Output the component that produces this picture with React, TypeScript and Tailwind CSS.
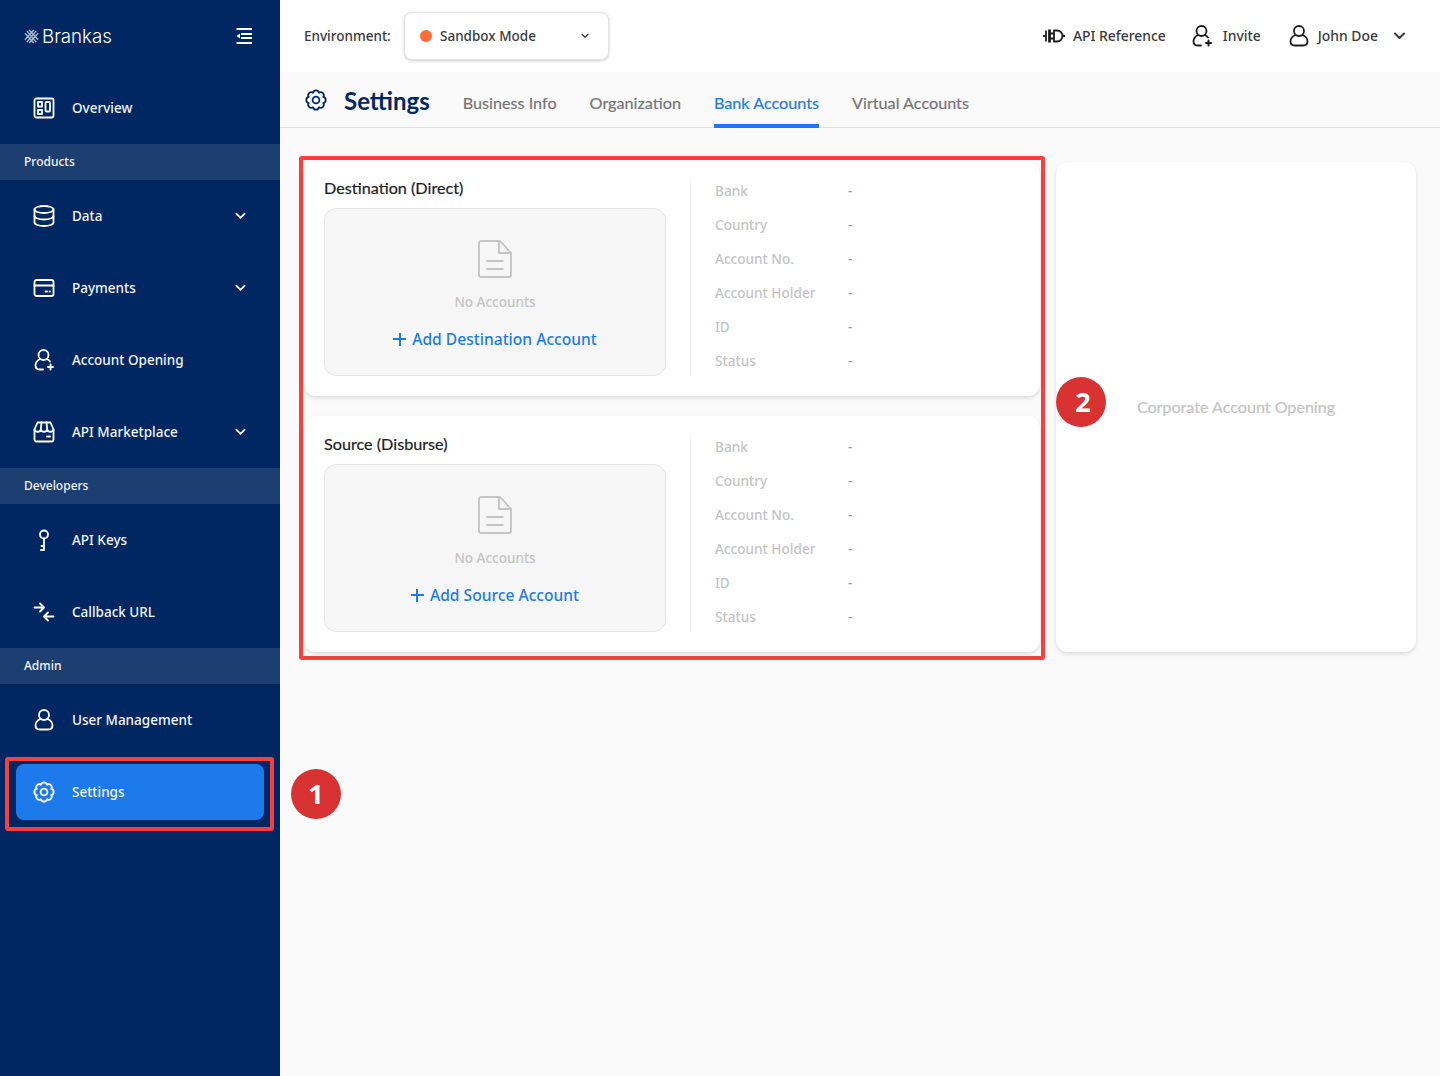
import React from 'react';

const ubuntuish = { fontFamily: '"Noto Sans", sans-serif' };
const lato = { fontFamily: 'Lato, sans-serif' };

type IconProps = { className?: string };

const Svg: React.FC<IconProps & { children: React.ReactNode }> = ({ className, children }) => (
  <svg viewBox="0 0 24 24" fill="none" stroke="currentColor" strokeWidth={1.8} strokeLinecap="round" strokeLinejoin="round" className={className}>
    {children}
  </svg>
);

const OverviewIcon = ({ className }: IconProps) => (
  <Svg className={className}>
    <rect x="2.5" y="2.5" width="19" height="19" rx="2" />
    <rect x="6" y="6" width="4" height="4.5" />
    <rect x="6" y="14" width="4" height="4" />
    <rect x="13.5" y="6" width="4.5" height="9.5" rx="1" />
  </Svg>
);
const DataIcon = ({ className }: IconProps) => (
  <Svg className={className}>
    <ellipse cx="12" cy="5.5" rx="9.5" ry="3.5" />
    <path d="M2.5 5.5v13c0 2 4.3 3.5 9.5 3.5s9.5-1.5 9.5-3.5v-13" />
    <path d="M2.5 12c0 2 4.3 3.5 9.5 3.5s9.5-1.5 9.5-3.5" />
  </Svg>
);
const CardIcon = ({ className }: IconProps) => (
  <Svg className={className}>
    <rect x="2.5" y="4" width="19" height="16" rx="2" />
    <path d="M2.5 9.5h19" />
    <path d="M13.5 15.5h1.5M17.5 15.5h.5" />
  </Svg>
);
const UserPlusIcon = ({ className }: IconProps) => (
  <Svg className={className}>
    <circle cx="11.5" cy="7" r="5" />
    <path d="M8 11c-3 1.5-4.5 4-4.5 6.5 0 2.5 2 4 4.5 4h3" />
    <path d="M15 11c1.2.6 2.2 1.4 3 2.5" />
    <path d="M18.5 16.5v5M16 19h5" strokeWidth={2} />
  </Svg>
);
const StoreIcon = ({ className }: IconProps) => (
  <Svg className={className}>
    <path d="M5.5 2.5h13l3 7v10a2 2 0 0 1-2 2h-15a2 2 0 0 1-2-2v-10z" />
    <path d="M2.5 9.5c1 3 5.5 3 6.3 0 .8 3 5.6 3 6.4 0 .8 3 5.3 3 6.3 0" />
    <path d="M8.8 9.5l.7-7M15.2 9.5l-.7-7" />
    <path d="M15 16.5h3" />
  </Svg>
);
const KeyIcon = ({ className }: IconProps) => (
  <Svg className={className}>
    <circle cx="12" cy="6.5" r="4" />
    <path d="M12 10.5V22h-3M12 18H9.5" />
  </Svg>
);
const ArrowsIcon = ({ className }: IconProps) => (
  <Svg className={className}>
    <path d="M2.5 7.5h9M8 3.5l4 4-4 4" />
    <path d="M21.5 16.5h-9M16 12.5l-4 4 4 4" />
  </Svg>
);
const UserIcon = ({ className }: IconProps) => (
  <Svg className={className}>
    <circle cx="12" cy="7" r="5" />
    <path d="M8.5 11c-3 1.2-5 3.5-5 6.5 0 2.5 2 4 4.5 4h8c2.5 0 4.5-1.5 4.5-4 0-3-2-5.3-5-6.5" />
  </Svg>
);

// eight rounded lobes around the centre
const gearPath = (() => {
  const pt = (k: number) => {
    const a = ((22.5 + 45 * k) * Math.PI) / 180;
    return `${(12 + 7.9 * Math.cos(a)).toFixed(2)} ${(12 + 7.9 * Math.sin(a)).toFixed(2)}`;
  };
  let d = `M${pt(0)}`;
  for (let k = 1; k <= 8; k++) d += `A3.1 3.1 0 0 1 ${pt(k)}`;
  return d + 'Z';
})();

const GearIcon = ({ className }: IconProps) => (
  <Svg className={className}>
    <circle cx="12" cy="12" r="3.4" />
    <path d={gearPath} />
  </Svg>
);
const ChevronIcon = ({ className }: IconProps) => (
  <svg viewBox="0 0 12 8" fill="none" stroke="currentColor" strokeWidth={2} strokeLinecap="round" strokeLinejoin="round" className={className}>
    <path d="M1.5 1.5 6 6l4.5-4.5" />
  </svg>
);
const PlugIcon = ({ className }: IconProps) => (
  <svg viewBox="0 0 22 14" fill="none" stroke="currentColor" strokeWidth={1.8} className={className}>
    <path d="M0 7h2M3 1.5v11M7 1.5h-1v11h1zM7 4.5h4M7 9.5h4M11 1.5h3a5.5 5.5 0 0 1 0 11h-3zM19.5 7H22" />
  </svg>
);
const DocIcon = ({ className }: IconProps) => (
  <svg viewBox="0 0 34 38" fill="none" stroke="currentColor" strokeWidth={1.8} strokeLinejoin="round" strokeLinecap="round" className={className}>
    <path d="M3 1h19l11 12v22a2 2 0 0 1-2 2H3a2 2 0 0 1-2-2V3a2 2 0 0 1 2-2z" />
    <path d="M21 1v12h12" />
    <path d="M9 21h16M9 29h16" />
  </svg>
);
const LogoIcon = ({ className }: IconProps) => (
  <svg viewBox="0 0 16 16" fill="none" stroke="currentColor" strokeWidth={1.5} className={className}>
    <path d="M3 2 13 14M5.5 1 15 11.5M1 4.5 10.5 15M13 2 3 14M10.5 1 1 11.5M15 4.5 5.5 15" opacity="0.85" />
  </svg>
);
const CollapseIcon = ({ className }: IconProps) => (
  <svg viewBox="0 0 16 16" fill="currentColor" className={className}>
    <rect x="0.5" y="0" width="15.5" height="2" />
    <rect x="5" y="5" width="11" height="2" />
    <rect x="5" y="9" width="11" height="2" />
    <rect x="0.5" y="14" width="15.5" height="2" />
    <path d="M4 5.5v5L0.5 8z" />
  </svg>
);

const NavItem: React.FC<{ icon: React.ReactNode; label: string; chevron?: boolean }> = ({ icon, label, chevron }) => (
  <div className="flex h-[72px] items-center pl-8 pr-[34px]">
    <span className="flex w-10 shrink-0">{icon}</span>
    <span className="flex-1 text-[13.5px] font-medium text-[#f2f5fa]">{label}</span>
    {chevron && <ChevronIcon className="h-[8px] w-[11px] text-white" />}
  </div>
);

const NavGroup: React.FC<{ label: string }> = ({ label }) => (
  <div className="flex h-9 items-center bg-[#1d3e70] pl-6 text-[12px] font-medium text-[#f2f5fa]">{label}</div>
);

const icon = 'h-6 w-6 text-white';

const Sidebar = () => (
  <aside className="flex w-[280px] shrink-0 flex-col bg-[#012763]" style={ubuntuish}>
    <div className="flex h-[72px] items-center pl-6 pr-[28px]">
      <LogoIcon className="h-[15px] w-[15px] text-[#c9d3e3]" />
      <span className="ml-[3px] flex-1 pt-[2px] text-[18.7px] font-light leading-none text-white" style={{ fontFamily: 'Inter, sans-serif' }}>Brankas</span>
      <CollapseIcon className="h-4 w-4 text-white" />
    </div>
    <NavItem icon={<OverviewIcon className={icon} />} label="Overview" />
    <NavGroup label="Products" />
    <NavItem icon={<DataIcon className={icon} />} label="Data" chevron />
    <NavItem icon={<CardIcon className={icon} />} label="Payments" chevron />
    <NavItem icon={<UserPlusIcon className={icon} />} label="Account Opening" />
    <NavItem icon={<StoreIcon className={icon} />} label="API Marketplace" chevron />
    <NavGroup label="Developers" />
    <NavItem icon={<KeyIcon className={icon} />} label="API Keys" />
    <NavItem icon={<ArrowsIcon className={icon} />} label="Callback URL" />
    <NavGroup label="Admin" />
    <NavItem icon={<UserIcon className={icon} />} label="User Management" />
    <div className="mx-4 mt-2 flex h-14 items-center rounded-lg bg-[#1d7aea] pl-4">
      <span className="flex w-10 shrink-0"><GearIcon className={icon} /></span>
      <span className="text-[13.5px] font-medium text-[#f2f5fa]">Settings</span>
    </div>
  </aside>
);

const TopBar = () => (
  <header className="flex h-[72px] items-center bg-white pl-6 pr-[34px] text-[13.9px] font-medium text-[#3a3a3a]" style={ubuntuish}>
    <span className="w-[88px] text-[13.5px]">Environment:</span>
    <div className="ml-3 flex h-12 w-[205px] items-center rounded-lg border border-[#e4e4e4] bg-white pl-[15px] pr-[19px] shadow-[0_1px_3px_rgba(0,0,0,0.2)]">
      <span className="h-3 w-3 rounded-full bg-[#ff6b35]" />
      <span className="ml-2 flex-1 text-[13.5px]">Sandbox Mode</span>
      <ChevronIcon className="h-[6px] w-[8px] text-[#3a3a3a]" />
    </div>
    <div className="ml-auto flex items-center">
      <PlugIcon className="h-[14px] w-[22px] text-[#1c1c1c]" />
      <span className="ml-[8px]">API Reference</span>
      <UserPlusIcon className="ml-[24px] h-6 w-6 text-[#1c1c1c]" />
      <span className="ml-[9px]">Invite</span>
      <UserIcon className="ml-[26px] h-6 w-6 text-[#1c1c1c]" />
      <span className="ml-[7px]">John Doe</span>
      <ChevronIcon className="ml-[15px] h-[8px] w-[13px] text-[#3a3a3a]" />
    </div>
  </header>
);

const tabs = ['Business Info', 'Organization', 'Bank Accounts', 'Virtual Accounts'];

const TabBar = () => (
  <div className="flex h-14 items-stretch border-b border-[#e0e0e0] pl-6" style={lato}>
    <div className="flex items-center pt-[3px]">
      <GearIcon className="-mt-[3px] h-6 w-6 text-[#012763]" />
      <span className="ml-4 text-[24px] font-bold text-[#012763]">Settings</span>
    </div>
    <div className="ml-[33px] flex gap-[33px] text-[16.2px] [-webkit-text-stroke:0.2px]">
      {tabs.map((t) => (
        <div key={t} className={t === 'Bank Accounts' ? '-mb-px flex items-center border-b-4 border-[#1d7aea] pt-[10px] text-[#1d7aea]' : '-mb-px flex items-center border-b-4 border-transparent pt-[10px] text-[#757575]'}>
          {t}
        </div>
      ))}
    </div>
  </div>
);

const fields = ['Bank', 'Country', 'Account No.', 'Account Holder', 'ID', 'Status'];

const AccountCard: React.FC<{ title: string; action: string; className: string }> = ({ title, action, className }) => (
  <section className={`flex rounded-xl bg-white px-5 shadow-[0_2px_4px_rgba(0,0,0,0.12)] ${className}`}>
    <div className="w-[342px] shrink-0">
      <h3 className="text-[16.2px] leading-5 text-[#1c1c1c] [-webkit-text-stroke:0.2px]" style={lato}>{title}</h3>
      <div className="mt-[10px] flex h-[168px] flex-col items-center rounded-xl border border-[#e6e6e6] bg-[#f6f6f6] pt-[31px]">
        <DocIcon className="h-[38px] w-[34px] text-[#c4c4c4]" />
        <span className="mt-[14px] text-[13.5px] font-medium leading-5 text-[#c4c4c4]">No Accounts</span>
        <span className="mt-4 flex items-center text-[15.6px] font-medium leading-[22px] text-[#1d7aea]">
          <span className="relative mr-[6px] h-[13px] w-[13px]">
            <span className="absolute left-0 top-[5.5px] h-[2px] w-[13px] bg-[#1d7aea]" />
            <span className="absolute left-[5.5px] top-0 h-[13px] w-[2px] bg-[#1d7aea]" />
          </span>
          {action}
        </span>
      </div>
    </div>
    <div className="ml-6 mt-[2px] h-[196px] border-l border-[#f1f1f1] pl-6 text-[13.6px] font-medium">
      <div className="-mt-[6px] flex flex-col">
        {fields.map((f) => (
          <div key={f} className="flex h-[34px] items-center">
            <span className="w-[133px] text-[#c4c4c4]">{f}</span>
            <span className="text-[#9a9a9a]">-</span>
          </div>
        ))}
      </div>
    </div>
  </section>
);

const Badge: React.FC<{ n: string; className: string }> = ({ n, className }) => (
  <div className={`absolute flex h-[50px] w-[50px] items-center justify-center rounded-full bg-[#d93232] text-[27px] font-bold text-white ${className}`}>
    {n}
  </div>
);

export default function App() {
  return (
    <div className="relative flex h-[1076px] w-[1440px] overflow-hidden bg-[#fafafa]" style={ubuntuish}>
      <Sidebar />
      <main className="flex min-w-0 flex-1 flex-col">
        <TopBar />
        <TabBar />
        <div className="flex gap-4 pl-6 pr-6 pt-[34px]">
          <div className="flex w-[736px] shrink-0 flex-col gap-5">
            <AccountCard className="h-[234px] pt-4" title="Destination (Direct)" action="Add Destination Account" />
            <AccountCard className="h-[236px] pt-[18px]" title="Source (Disburse)" action="Add Source Account" />
          </div>
          <section className="flex h-[490px] flex-1 items-center justify-center rounded-xl bg-white shadow-[0_2px_4px_rgba(0,0,0,0.12)]">
            <span className="text-[16.1px] text-[#c4c4c4] [-webkit-text-stroke:0.2px]" style={lato}>Corporate Account Opening</span>
          </section>
        </div>
      </main>

      {/* annotation overlays */}
      <div className="absolute left-[299px] top-[156px] h-[504px] w-[746px] rounded-[3px] border-4 border-[#fa3e3e]" />
      <div className="absolute left-[5px] top-[757px] h-[74px] w-[269px] rounded-[3px] border-4 border-[#fa3e3e]" />
      <Badge n="1" className="left-[291px] top-[769px]" />
      <Badge n="2" className="left-[1056px] top-[377px] pl-[4px]" />
    </div>
  );
}
